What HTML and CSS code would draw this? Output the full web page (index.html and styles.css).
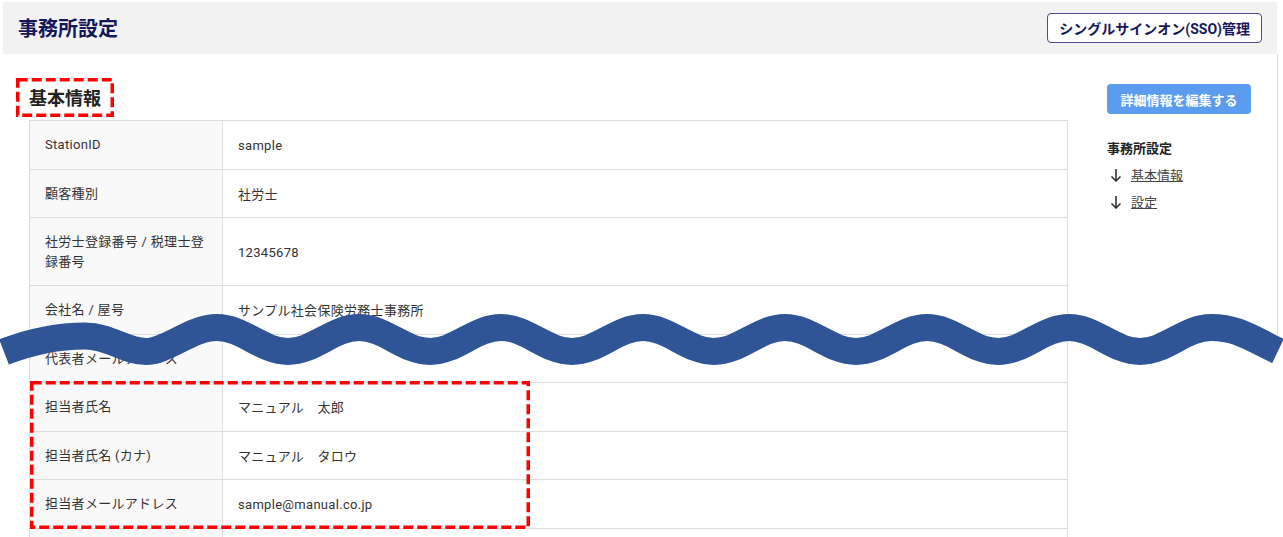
FILE: index.html
```html
<!DOCTYPE html>
<html lang="ja">
<head>
<meta charset="utf-8">
<title>事務所設定</title>
<link rel="stylesheet" href="styles.css">
</head>
<body>
<div class="screen">
  <div class="page">
    <header class="page-header">
      <h1 class="page-title">事務所設定</h1>
      <button class="btn-outline" type="button">シングルサインオン(SSO)管理</button>
    </header>
    <div class="content">
      <main class="main">
        <div class="section-head">
          <h2 class="section-title">基本情報</h2>
          <svg class="mark mark-title" viewBox="0 0 98 39" width="98" height="39"><rect x="1.75" y="1.75" width="94.5" height="35.5" /></svg>
        </div>
        <div class="table-wrap">
          <table class="info">
            <tbody>
              <tr><th>StationID</th><td>sample</td></tr>
              <tr><th>顧客種別</th><td>社労士</td></tr>
              <tr><th>社労士登録番号 / 税理士登録番号</th><td>12345678</td></tr>
              <tr><th>会社名 / 屋号</th><td>サンプル社会保険労務士事務所</td></tr>
              <tr><th>代表者メールアドレス</th><td></td></tr>
              <tr><th>担当者氏名</th><td>マニュアル　太郎</td></tr>
              <tr><th>担当者氏名 (カナ)</th><td>マニュアル　タロウ</td></tr>
              <tr><th>担当者メールアドレス</th><td>sample@manual.co.jp</td></tr>
              <tr><th>&nbsp;</th><td></td></tr>
            </tbody>
          </table>
          <svg class="mark mark-rows" viewBox="0 0 500 148" width="500" height="148"><rect x="1.75" y="1.75" width="496.5" height="144.5" /></svg>
        </div>
      </main>
      <aside class="side">
        <button class="btn-primary" type="button">詳細情報を編集する</button>
        <div class="toc-title">事務所設定</div>
        <ul class="toc">
          <li><svg class="arrow" viewBox="0 0 12 14" width="12" height="14"><path d="M6 1V13M1.5 8.5L6 13L10.5 8.5" /></svg><a href="#">基本情報</a></li>
          <li><svg class="arrow" viewBox="0 0 12 14" width="12" height="14"><path d="M6 1V13M1.5 8.5L6 13L10.5 8.5" /></svg><a href="#">設定</a></li>
        </ul>
      </aside>
    </div>
  </div>
  <svg class="wave" viewBox="0 0 1283 537" width="1283" height="537">
    <path d="M4 352C30 342 60 336 85 336C110 336 125 351.5 146 351.5S191 327.5 217 327.5S262 351.5 288 351.5S333 327.5 359 327.5S404 351.5 430 351.5S475 327.5 501 327.5S546 351.5 572 351.5S617 327.5 643 327.5S688 351.5 714 351.5S759 327.5 785 327.5S830 351.5 856 351.5S901 327.5 927 327.5S972 351.5 998 351.5S1043 327.5 1069 327.5S1114 351.5 1140 351.5S1185 327.5 1211 327.5S1251 338 1278 351" />
  </svg>
</div>
</body>
</html>
```

FILE: styles.css
```css
html, body {
  margin: 0;
  padding: 0;
  background: #ffffff;
  font-family: Roboto, "Noto Sans CJK JP", sans-serif;
  color: #333333;
}

.screen {
  position: relative;
  width: 1283px;
  height: 537px;
  overflow: hidden;
}

.page {
  position: relative;
  width: 1274px;
  margin: 2px 0 0 3px;
}

.page::after {
  content: "";
  position: absolute;
  left: 1274px;
  top: 52px;
  width: 1px;
  height: 280px;
  background: #dddddd;
}

.page-header {
  height: 52px;
  background: #f2f2f2;
  display: flex;
  align-items: center;
  justify-content: space-between;
  padding: 0 15px;
}

.page-title {
  margin: 0;
  font-family: "Noto Sans CJK JP", sans-serif;
  font-size: 20px;
  font-weight: 700;
  color: #16165a;
  line-height: 28px;
}

.btn-outline {
  height: 30px;
  padding: 0 11px;
  border: 1px solid #4d4d8c;
  border-radius: 4px;
  background: #ffffff;
  color: #16165a;
  font-family: Roboto, "Noto Sans CJK JP", sans-serif;
  font-size: 14px;
  font-weight: 700;
}

.content {
  display: flex;
  align-items: flex-start;
  gap: 39px;
  padding: 31px 0 0 26px;
}

.main {
  width: 1039px;
}

.section-head {
  position: relative;
  margin-bottom: 11px;
}

.section-title {
  margin: 0;
  font-family: "Noto Sans CJK JP", sans-serif;
  font-size: 18px;
  font-weight: 700;
  line-height: 24px;
  color: #222222;
}

.mark {
  position: absolute;
  pointer-events: none;
}

.mark rect {
  fill: none;
  stroke: #ff0000;
  stroke-width: 3.5;
  stroke-dasharray: 10 4;
}

.mark-title {
  left: -13px;
  top: -7px;
}

.table-wrap {
  position: relative;
}

.mark-rows {
  left: 1px;
  top: 261px;
}

.info {
  width: 1039px;
  border-collapse: collapse;
  border: 1px solid #dddddd;
}

.info th,
.info td {
  border: 1px solid #dddddd;
  padding: 14px 15px;
  font-size: 13px;
  line-height: 19.5px;
  font-weight: 400;
  color: #333333;
  text-align: left;
  vertical-align: middle;
  letter-spacing: 0.3px;
}

.info td {
  padding-top: 15px;
  padding-bottom: 13px;
}

.info th {
  width: 162px;
  background: #f9f9f9;
}

.side {
  width: 144px;
  display: flex;
  flex-direction: column;
  align-items: flex-start;
  margin-top: -1px;
}

.btn-primary {
  width: 144px;
  height: 30px;
  border: none;
  border-radius: 4px;
  background: #5c9cef;
  color: #ffffff;
  font-family: "Noto Sans CJK JP", sans-serif;
  font-size: 13px;
  font-weight: 700;
  padding: 0;
}

.toc-title {
  margin-top: 24px;
  font-family: "Noto Sans CJK JP", sans-serif;
  font-size: 13px;
  font-weight: 700;
  line-height: 20px;
  color: #222222;
}

.toc {
  list-style: none;
  margin: 3px 0 0 0;
  padding: 0;
}

.toc li {
  display: flex;
  align-items: center;
  gap: 9px;
  height: 27px;
  padding-left: 3px;
}

.arrow path {
  fill: none;
  stroke: #333333;
  stroke-width: 1.6;
}

.toc a {
  font-family: "Noto Sans CJK JP", sans-serif;
  font-size: 13px;
  color: #444444;
  text-decoration: underline;
}

.wave {
  position: absolute;
  left: 0;
  top: 0;
  pointer-events: none;
}

.wave path {
  fill: none;
  stroke: #2f5597;
  stroke-width: 27;
  stroke-linecap: butt;
}
```
